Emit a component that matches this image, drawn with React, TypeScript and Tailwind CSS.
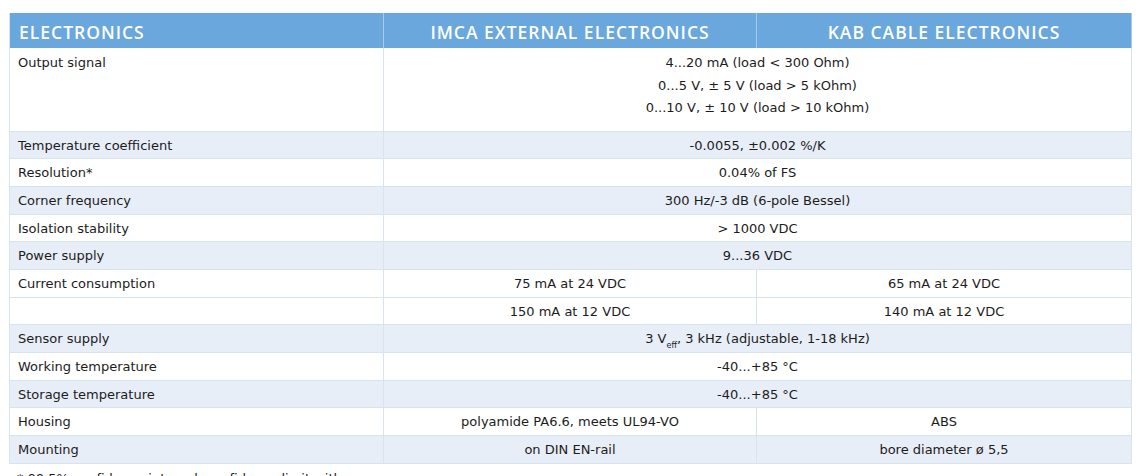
type Row = {
  label: string;
  cells: React.ReactNode[];
  shade: boolean;
  tall?: boolean;
};

const rows: Row[] = [
  {
    label: "Output signal",
    shade: false,
    tall: true,
    cells: [
      <div className="flex flex-col leading-[22.5px] pt-[4px]">
        <span>4...20 mA (load &lt; 300 Ohm)</span>
        <span>0...5 V, ± 5 V (load &gt; 5 kOhm)</span>
        <span>0...10 V, ± 10 V (load &gt; 10 kOhm)</span>
      </div>,
    ],
  },
  { label: "Temperature coefficient", shade: true, cells: ["-0.0055, ±0.002 %/K"] },
  { label: "Resolution*", shade: false, cells: ["0.04% of FS"] },
  { label: "Corner frequency", shade: true, cells: ["300 Hz/-3 dB (6-pole Bessel)"] },
  { label: "Isolation stability", shade: false, cells: ["> 1000 VDC"] },
  { label: "Power supply", shade: true, cells: ["9...36 VDC"] },
  { label: "Current consumption", shade: false, cells: ["75 mA at 24 VDC", "65 mA at 24 VDC"] },
  { label: "", shade: false, cells: ["150 mA at 12 VDC", "140 mA at 12 VDC"] },
  {
    label: "Sensor supply",
    shade: true,
    cells: [
      <span>
        3 V<sub className="text-[8px] align-[-3px]">eff</sub>, 3 kHz (adjustable, 1-18 kHz)
      </span>,
    ],
  },
  { label: "Working temperature", shade: false, cells: ["-40...+85 °C"] },
  { label: "Storage temperature", shade: true, cells: ["-40...+85 °C"] },
  { label: "Housing", shade: false, cells: ["polyamide PA6.6, meets UL94-VO", "ABS"] },
  { label: "Mounting", shade: true, cells: ["on DIN EN-rail", "bore diameter ø 5,5"] },
];

export default function App() {
  return (
    <div className="bg-white w-[1142px] h-[476px] overflow-hidden pl-[9px] pt-[13px] text-[#1c1c1c] font-['DejaVu_Sans',sans-serif] text-[13px]">
      <table className="w-[1122px] table-fixed border-collapse">
        <colgroup>
          <col className="w-[374px]" />
          <col className="w-[373px]" />
          <col className="w-[375px]" />
        </colgroup>
        <thead>
          <tr className="h-[35px] bg-[#69a7dc] text-white text-[17.5px] font-['Open_Sans',sans-serif] font-semibold tracking-[1px]">
            <th className="text-left pl-[9px] pt-[4px] font-semibold border-l border-[#d6e2f0]">ELECTRONICS</th>
            <th className="text-center pt-[4px] font-semibold border-l border-[#a8cbec]">IMCA EXTERNAL ELECTRONICS</th>
            <th className="text-center pt-[4px] font-semibold border-l border-r border-[#a8cbec]">KAB CABLE ELECTRONICS</th>
          </tr>
        </thead>
        <tbody>
          {rows.map((r, i) => (
            <tr
              key={i}
              className={`${r.shade ? "bg-[#e8eef8]" : "bg-white"} ${r.tall ? "h-[83px]" : "h-[27.7px]"} border-b border-[#d8e3f0]`}
            >
              <td className={`pl-[8px] border-l border-[#d8e3f0] ${r.tall ? "align-top pt-[5px]" : "align-middle pt-[1px]"}`}>{r.label}</td>
              {r.cells.length === 1 ? (
                <td colSpan={2} className={`text-center border-l border-r border-[#d8e3f0] ${r.tall ? "align-top" : "align-middle pt-[1px]"}`}>
                  {r.cells[0]}
                </td>
              ) : (
                <>
                  <td className="text-center border-l border-[#d8e3f0] align-middle pt-[1px]">{r.cells[0]}</td>
                  <td className="text-center border-l border-r border-[#d8e3f0] align-middle pt-[1px]">{r.cells[1]}</td>
                </>
              )}
            </tr>
          ))}
        </tbody>
      </table>
      <p className="mt-[7px] pl-[8px] leading-[16px]">* 99.5% confidence interval, confidence limit with ...</p>
    </div>
  );
}
